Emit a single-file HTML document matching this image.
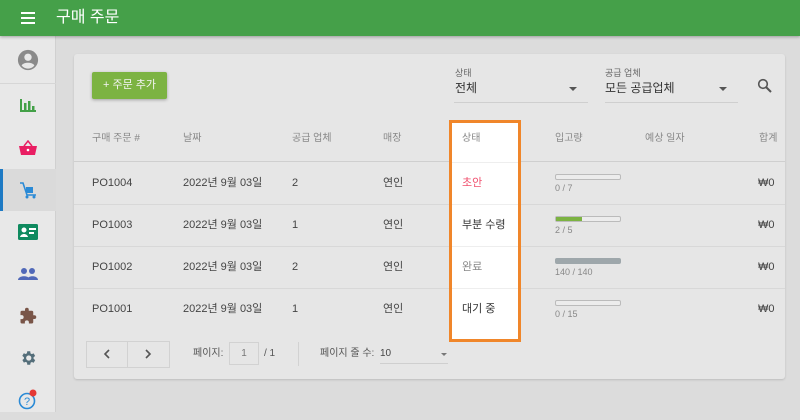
<!DOCTYPE html>
<html><head><meta charset="utf-8"><style>
*{margin:0;padding:0;box-sizing:border-box}
body{width:800px;height:412px;overflow:hidden;background:#dcdcdc;font-family:"Liberation Sans","Noto Sans CJK KR",sans-serif;position:relative;color:#333;line-height:14px}
.hdr{position:absolute;left:0;top:0;width:800px;height:36px;background:#45a049;box-shadow:0 1px 3px rgba(0,0,0,.3);z-index:3}
.hdr .t{position:absolute;left:56px;top:8px;color:#fff;font-size:16px;line-height:20px}
.hb{position:absolute;left:21px;top:12px;width:14px;height:2px;background:#fff;box-shadow:0 5px 0 #fff,0 10px 0 #fff}
.side{position:absolute;left:0;top:36px;width:56px;height:376px;background:#e8e8e8;border-right:1px solid #d0d0d0}
.si{position:absolute;left:0;width:56px;height:42px;display:flex;align-items:center;justify-content:center}
.card{position:absolute;left:74px;top:54px;width:711px;height:325px;background:#e6e6e6;border-radius:3px;box-shadow:0 1px 2px rgba(0,0,0,.15)}
.abs{position:absolute;white-space:nowrap;line-height:14px}
.btn{left:92px;top:72px;width:75px;height:27px;background:#7cb342;font-size:11px;color:#f4f4f4;text-align:center;line-height:27px !important;box-shadow:0 1px 3px rgba(0,0,0,.3);border-radius:2px}
.lbl{font-size:9px;color:#666}
.sel{font-size:12px;color:#333}
.line{height:1px;background:#cfcfcf}
.th{font-size:10px;color:#888}
.td{font-size:11px;color:#444}
.bar{position:absolute;width:66px;height:6px;border:1px solid #bbb;border-radius:2px;background:#ececec}
.q{font-size:9px;color:#888}
.box{position:absolute;left:449px;top:120px;width:72px;height:222px;border:3px solid #f0862a;background:#fff}
</style></head><body>
<div class="hdr"><div class="hb"></div><div class="t">구매 주문</div></div>
<div class="side">
 <div class="si" style="top:0;height:48px;border-bottom:1px solid #d6d6d6"><svg width="22" height="22" viewBox="0 0 24 24"><circle cx="12" cy="12" r="11" fill="#8a8a8a"/><circle cx="12" cy="9" r="4" fill="#e8e8e8"/><path d="M5 18c2-4 12-4 14 0a9 9 0 0 1-14 0z" fill="#e8e8e8"/></svg></div>
 <div class="si" style="top:48px"><svg width="18" height="16"><rect x="1" y="2" width="2" height="13" fill="#43a047"/><rect x="5" y="6" width="2.5" height="9" fill="#43a047"/><rect x="9" y="4" width="2.5" height="11" fill="#43a047"/><rect x="13" y="9" width="2.5" height="6" fill="#43a047"/><rect x="1" y="13" width="16" height="2" fill="#43a047"/></svg></div>
 <div class="si" style="top:91px"><svg width="20" height="16" viewBox="0 0 20 16"><path d="M1 6h18l-2 9H3z" fill="#e91e63"/><path d="M6 6l4-5 4 5" stroke="#e91e63" stroke-width="1.5" fill="none"/><circle cx="10" cy="10" r="1.3" fill="#fff"/></svg></div>
 <div class="si" style="top:133px;background:#dadada;height:42px"><div style="position:absolute;left:0;top:0;width:3px;height:42px;background:#1e7ac4"></div><svg width="20" height="18" viewBox="0 0 20 18"><path d="M2 2h3l4 12h9" stroke="#2a8ad6" stroke-width="1.6" fill="none"/><rect x="8" y="6" width="7" height="6" fill="#2a8ad6"/><circle cx="9" cy="16" r="1.5" fill="#2a8ad6"/><circle cx="16" cy="16" r="1.5" fill="#2a8ad6"/></svg></div>
 <div class="si" style="top:175px"><svg width="20" height="16"><rect width="20" height="16" rx="1.5" fill="#0f8a5f"/><circle cx="6" cy="6" r="2.5" fill="#fff"/><path d="M2 13c1-4 7-4 8 0z" fill="#fff"/><rect x="11" y="4" width="7" height="2" fill="#fff"/><rect x="11" y="8" width="5" height="2" fill="#fff"/></svg></div>
 <div class="si" style="top:217px"><svg width="20" height="14"><circle cx="6" cy="4" r="3" fill="#5068b8"/><circle cx="14" cy="4" r="3" fill="#5068b8"/><path d="M0 13c0-5 12-5 12 0zM9 13c0-5 11-5 11 0z" fill="#5068b8"/></svg></div>
 <div class="si" style="top:259px"><svg width="18" height="18" viewBox="0 0 24 24"><path d="M20.5 11H19V7a2 2 0 0 0-2-2h-4V3.5a2.5 2.5 0 0 0-5 0V5H4a2 2 0 0 0-2 2v3.8h1.5a2.7 2.7 0 0 1 0 5.4H2V20a2 2 0 0 0 2 2h3.8v-1.5a2.7 2.7 0 0 1 5.4 0V22H17a2 2 0 0 0 2-2v-4h1.5a2.5 2.5 0 0 0 0-5z" fill="#795548"/></svg></div>
 <div class="si" style="top:301px"><svg width="18" height="18" viewBox="0 0 24 24"><path d="M19.4 13a7.5 7.5 0 0 0 0-2l2.1-1.6-2-3.5-2.5 1a7 7 0 0 0-1.7-1L15 3h-4l-.4 2.7a7 7 0 0 0-1.7 1l-2.5-1-2 3.5L6.6 11a7.5 7.5 0 0 0 0 2l-2.1 1.6 2 3.5 2.5-1a7 7 0 0 0 1.7 1L11 21h4l.4-2.7a7 7 0 0 0 1.7-1l2.5 1 2-3.5zM13 15.5a3.5 3.5 0 1 1 0-7 3.5 3.5 0 0 1 0 7z" fill="#546e7a"/></svg></div>
 <div class="si" style="top:342px"><svg width="22" height="22"><circle cx="10" cy="13" r="7.5" stroke="#2a8ad6" stroke-width="1.6" fill="none"/><text x="10" y="17" font-size="11" fill="#2a8ad6" text-anchor="middle" font-family="Liberation Sans">?</text><circle cx="16" cy="5" r="3.5" fill="#e53935"/></svg></div>
</div>
<div class="card"></div>
<div class="abs btn">+ 주문 추가</div>
<div class="abs lbl" style="left:455px;top:66px">상태</div>
<div class="abs sel" style="left:455px;top:81px">전체</div>
<div class="abs" style="left:569px;top:87px;border:4px solid transparent;border-top-color:#555;border-bottom:0"></div>
<div class="abs line" style="left:454px;top:102px;width:134px"></div>
<div class="abs lbl" style="left:605px;top:66px">공급 업체</div>
<div class="abs sel" style="left:605px;top:81px">모든 공급업체</div>
<div class="abs" style="left:719px;top:87px;border:4px solid transparent;border-top-color:#555;border-bottom:0"></div>
<div class="abs line" style="left:605px;top:102px;width:133px"></div>
<svg class="abs" style="left:757px;top:78px" width="16" height="16"><circle cx="6" cy="6" r="4.3" stroke="#555" stroke-width="1.6" fill="none"/><path d="M9 9l5 5" stroke="#555" stroke-width="2"/></svg>
<div class="abs th" style="left:92px;top:132px">구매 주문 #</div>
<div class="abs th" style="left:183px;top:132px">날짜</div>
<div class="abs th" style="left:292px;top:132px">공급 업체</div>
<div class="abs th" style="left:383px;top:132px">매장</div>
<div class="abs th" style="left:555px;top:132px">입고량</div>
<div class="abs th" style="left:645px;top:132px">예상 일자</div>
<div class="abs th" style="left:759px;top:132px">합계</div>
<div class="abs line" style="left:74px;top:161px;width:711px"></div>
<div class="abs line" style="left:74px;top:204px;width:711px;background:#d8d8d8"></div>
<div class="abs line" style="left:74px;top:246px;width:711px;background:#d8d8d8"></div>
<div class="abs line" style="left:74px;top:288px;width:711px;background:#d8d8d8"></div>

<div class="abs td" style="left:92px;top:176px">PO1004</div><div class="abs td" style="left:183px;top:176px">2022년 9월 03일</div><div class="abs td" style="left:292px;top:176px">2</div><div class="abs td" style="left:383px;top:176px">연인</div>
<div class="bar" style="left:555px;top:174px"></div><div class="abs q" style="left:555px;top:181px">0 / 7</div><div class="abs td" style="left:758px;top:176px">₩0</div>
<div class="abs td" style="left:92px;top:218px">PO1003</div><div class="abs td" style="left:183px;top:218px">2022년 9월 03일</div><div class="abs td" style="left:292px;top:218px">1</div><div class="abs td" style="left:383px;top:218px">연인</div>
<div class="bar" style="left:555px;top:216px"><div style="width:26px;height:4px;background:#7cb342"></div></div><div class="abs q" style="left:555px;top:223px">2 / 5</div><div class="abs td" style="left:758px;top:218px">₩0</div>
<div class="abs td" style="left:92px;top:260px">PO1002</div><div class="abs td" style="left:183px;top:260px">2022년 9월 03일</div><div class="abs td" style="left:292px;top:260px">2</div><div class="abs td" style="left:383px;top:260px">연인</div>
<div class="bar" style="left:555px;top:258px;background:#9ea7ab;border-color:#9ea7ab"></div><div class="abs q" style="left:555px;top:265px">140 / 140</div><div class="abs td" style="left:758px;top:260px">₩0</div>
<div class="abs td" style="left:92px;top:302px">PO1001</div><div class="abs td" style="left:183px;top:302px">2022년 9월 03일</div><div class="abs td" style="left:292px;top:302px">1</div><div class="abs td" style="left:383px;top:302px">연인</div>
<div class="bar" style="left:555px;top:300px"></div><div class="abs q" style="left:555px;top:307px">0 / 15</div><div class="abs td" style="left:758px;top:302px">₩0</div>

<div class="box">
 <div class="abs th" style="left:10px;top:9px">상태</div>
 <div class="abs line" style="left:0;top:39px;width:66px;background:#eee"></div>
 <div class="abs td" style="left:10px;top:53px;color:#f0506e">초안</div>
 <div class="abs line" style="left:0;top:81px;width:66px;background:#eee"></div>
 <div class="abs td" style="left:10px;top:95px;color:#333">부분 수령</div>
 <div class="abs line" style="left:0;top:123px;width:66px;background:#eee"></div>
 <div class="abs td" style="left:10px;top:137px;color:#888">완료</div>
 <div class="abs line" style="left:0;top:165px;width:66px;background:#eee"></div>
 <div class="abs td" style="left:10px;top:179px;color:#333">대기 중</div>
</div>

<div class="abs" style="left:86px;top:341px;width:84px;height:27px;border:1px solid #d2d2d2"></div>
<div class="abs" style="left:127px;top:341px;width:1px;height:27px;background:#d2d2d2"></div>
<svg class="abs" style="left:102px;top:348px" width="10" height="12"><path d="M7 2L3 6l4 4" stroke="#555" stroke-width="1.6" fill="none"/></svg>
<svg class="abs" style="left:143px;top:348px" width="10" height="12"><path d="M3 2l4 4-4 4" stroke="#555" stroke-width="1.6" fill="none"/></svg>
<div class="abs" style="left:193px;top:347px;font-size:10px;color:#555">페이지:</div>
<div class="abs" style="left:229px;top:342px;width:30px;height:23px;border:1px solid #d2d2d2;font-size:10px;color:#777;text-align:center;line-height:21px">1</div>
<div class="abs" style="left:264px;top:347px;font-size:10px;color:#555">/ 1</div>
<div class="abs" style="left:298px;top:342px;width:1px;height:24px;background:#d2d2d2"></div>
<div class="abs" style="left:320px;top:347px;font-size:10px;color:#555">페이지 줄 수:</div>
<div class="abs" style="left:380px;top:347px;font-size:10px;color:#444">10</div>
<div class="abs" style="left:441px;top:353px;border:3px solid transparent;border-top-color:#777;border-bottom:0"></div>
<div class="abs line" style="left:380px;top:363px;width:68px"></div>
</body></html>
